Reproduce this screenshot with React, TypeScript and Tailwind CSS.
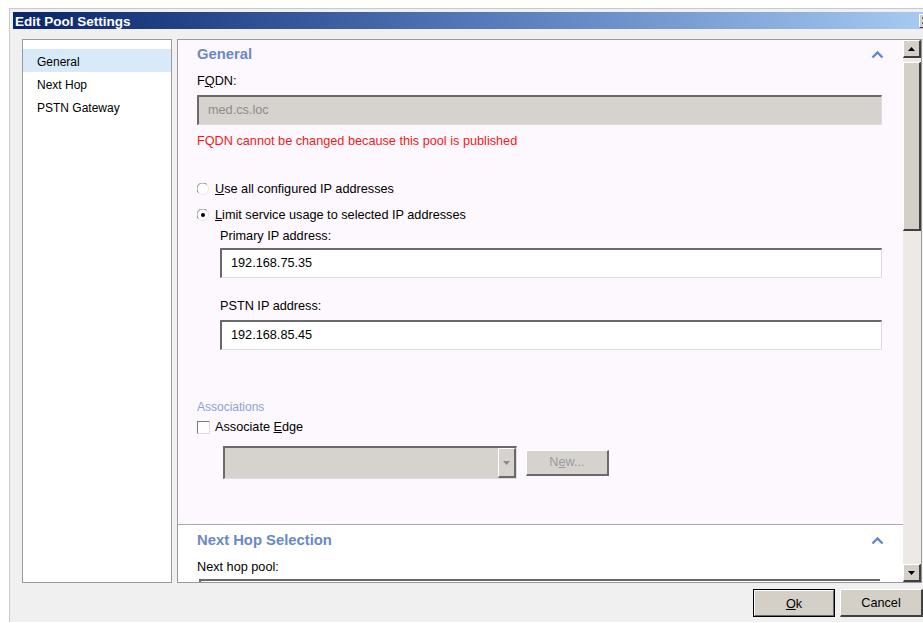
import React from 'react';

const Chevron = () => (
  <svg width="13" height="9" viewBox="0 0 13 9" className="shrink-0">
    <path d="M1.5 7.5 L6.5 2.5 L11.5 7.5" fill="none" stroke="#5f86d2" strokeWidth="2.4" />
  </svg>
);

const Radio = ({ checked }: { checked?: boolean }) => (
  <svg width="12" height="12" viewBox="0 0 12 12" className="shrink-0">
    <circle cx="6" cy="6" r="5.5" fill="#fff" />
    <path d="M1.6 9.9 A5.5 5.5 0 0 1 9.9 1.6" fill="none" stroke="#808080" strokeWidth="1" />
    <path d="M9.9 1.6 A5.5 5.5 0 0 1 1.6 9.9" fill="none" stroke="#e6e6e6" strokeWidth="1" />
    {checked && <circle cx="6" cy="6" r="2" fill="#000" />}
  </svg>
);

const Checkbox = () => (
  <span className="block w-[13px] h-[13px] shrink-0 bg-white border-t border-l border-[#7a7a7a] border-r border-b border-r-[#dedede] border-b-[#dedede]" />
);

const TextBox = ({ value, disabled }: { value?: string; disabled?: boolean }) => (
  <div
    className={
      'h-[30px] flex items-center pl-[9px] border-t-2 border-l-2 border-[#6a6a6a] border-r border-b border-r-[#dcdcdc] border-b-[#dcdcdc] ' +
      (disabled ? 'bg-[#d6d3ce] text-[#8c8c8c] border-r-[#d6d3ce] border-b-[#d6d3ce]' : 'bg-white text-black')
    }
  >
    {value}
  </div>
);

const ScrollArrow = ({ down }: { down?: boolean }) => (
  <div className="h-[18px] flex items-center justify-center bg-[#d4d0c8] border-t border-l border-white border-r-2 border-b-2 border-r-[#404040] border-b-[#404040]">
    <svg width="7" height="4" viewBox="0 0 7 4">
      <path d={down ? 'M0 0 L7 0 L3.5 4 Z' : 'M0 4 L7 4 L3.5 0 Z'} fill="#000" />
    </svg>
  </div>
);

const NavItem = ({ label, active }: { label: string; active?: boolean }) => (
  <div className={'h-[23px] flex items-center pl-[14px] pt-[2px] ' + (active ? 'bg-[#d8eaf9]' : '')}>{label}</div>
);

export default function App() {
  return (
    <div className="w-[923px] h-[623px] overflow-hidden bg-white text-[12px] text-black font-['Liberation_Sans',Arial,sans-serif]">
      <div className="ml-[9px] mt-[8px] h-[614px] border-l border-t border-[#c9c9c9] bg-[#f0f0f0] pl-[3px] pt-[3px] flex flex-col">
        {/* title bar */}
        <div className="h-[17px] -mr-[12px] flex items-center bg-gradient-to-r from-[#0a246a] via-[#5478b8] to-[#a8ccf2]">
          <span className="flex-1 pl-[2px] pt-[3px] text-[13.5px] font-bold text-white">Edit Pool Settings</span>
          <span className="w-[16px] h-[14px] flex items-center pl-[2px] bg-[#d4d0c8] border-t border-l border-white border-r border-b border-r-[#404040] border-b-[#404040]">
            <svg width="7" height="7" viewBox="0 0 7 7">
              <path d="M0.5 0.5 L6.5 6.5 M6.5 0.5 L0.5 6.5" stroke="#000" strokeWidth="1.5" />
            </svg>
          </span>
        </div>

        {/* panels */}
        <div className="flex gap-[5px] pl-[9px] pt-[10px]">
          <div className="w-[150px] h-[544px] bg-white border border-[#9a9a9a] pt-[9px]">
            <NavItem label="General" active />
            <NavItem label="Next Hop" />
            <NavItem label="PSTN Gateway" />
          </div>

          <div className="w-[745px] h-[544px] border border-[#9a9a9a] flex overflow-hidden text-[12.7px]">
            <div className="flex-1 flex flex-col">
              {/* General section */}
              <div className="h-[485px] shrink-0 bg-[#fdf8fd] border-b border-[#a8a8a8] pl-[19px] pr-[21px]">
                <div className="h-[26px] pt-[2px] flex items-center justify-between">
                  <span className="text-[14.8px] font-bold text-[#6a88c8]">General</span>
                  <span className="mr-[-2px]"><Chevron /></span>
                </div>
                <div className="h-[29px] pt-[3px] flex items-center">
                  <span>F<u className="underline-offset-1">Q</u>DN:</span>
                </div>
                <TextBox value="med.cs.loc" disabled />
                <div className="h-[28px] mt-[1px] pt-[3px] flex items-center text-[#f21a1a]">
                  FQDN cannot be changed because this pool is published
                </div>
                <div className="h-[26px] mt-[22px] flex items-center gap-[6px]">
                  <Radio />
                  <span className="pt-[1px]"><u>U</u>se all configured IP addresses</span>
                </div>
                <div className="h-[26px] flex items-center gap-[6px]">
                  <Radio checked />
                  <span className="pt-[1px]"><u>L</u>imit service usage to selected IP addresses</span>
                </div>
                <div className="pl-[23px]">
                  <div className="h-[17px] flex items-center">Primary IP address:</div>
                  <div className="mt-[3px]">
                    <TextBox value="192.168.75.35" />
                  </div>
                  <div className="h-[20px] mt-[18px] pt-[2px] flex items-center">PSTN IP address:</div>
                  <div className="mt-[4px]">
                    <TextBox value="192.168.85.45" />
                  </div>
                </div>
                <div className="h-[20px] mt-[46px] pt-[2px] flex items-center text-[12px] text-[#8aa2d8]">Associations</div>
                <div className="h-[20px] pt-[3px] flex items-center gap-[5px]">
                  <Checkbox />
                  <span className="pt-[1px]">Associate <u>E</u>dge</span>
                </div>
                <div className="mt-[10px] ml-[26px] flex items-center gap-[9px]">
                  <div className="w-[294px] h-[33px] flex justify-end bg-[#d6d3ce] border-t-2 border-l-2 border-[#6a6a6a] border-r border-b border-r-[#dcdcdc] border-b-[#dcdcdc]">
                    <div className="w-[18px] flex items-center justify-center bg-[#d6d3ce] border-l border-t border-white border-r-2 border-b-2 border-r-[#6a6a6a] border-b-[#6a6a6a]">
                      <svg width="7" height="4" viewBox="0 0 7 4">
                        <path d="M0 0 L7 0 L3.5 4 Z" fill="#8a8a8a" />
                      </svg>
                    </div>
                  </div>
                  <div className="w-[83px] h-[26px] pt-[2px] flex items-center justify-center bg-[#d6d3ce] text-[#9a9a9a] border-t border-l border-white border-r-2 border-b-2 border-r-[#6a6a6a] border-b-[#6a6a6a]">
                    <span>N<u>e</u>w...</span>
                  </div>
                </div>
              </div>

              {/* Next hop section */}
              <div className="flex-1 bg-white pl-[19px] pr-[21px] overflow-hidden">
                <div className="h-[28px] pt-[2px] flex items-center justify-between">
                  <span className="text-[14.8px] font-bold text-[#6a88c8]">Next Hop Selection</span>
                  <span className="mr-[-2px]"><Chevron /></span>
                </div>
                <div className="h-[26px] pt-[3px] flex items-center">Next hop pool:</div>
                <div className="ml-[2px] mr-[2px] h-[10px] border-t-2 border-l-2 border-[#6a6a6a] bg-white" />
              </div>
            </div>

            {/* scrollbar */}
            <div className="w-[18px] shrink-0 bg-[#ece9e6] flex flex-col">
              <ScrollArrow />
              <div className="h-[4px]" />
              <div className="h-[169px] bg-[#d4d0c8] border-t border-l border-white border-r-2 border-b-2 border-r-[#404040] border-b-[#404040]" />
              <div className="flex-1" />
              <ScrollArrow down />
            </div>
          </div>
        </div>

        {/* dialog buttons */}
        <div className="flex justify-end gap-[5px] pt-[6px] text-[12.7px]">
          <div className="w-[82px] h-[28px] border border-black">
            <div className="h-full pt-[3px] flex items-center justify-center bg-[#d4d0c8] border-t border-l border-white border-r border-b border-r-[#6a6a6a] border-b-[#6a6a6a]">
              <span><u>O</u>k</span>
            </div>
          </div>
          <div className="w-[83px] h-[28px] pt-[3px] flex items-center justify-center bg-[#d4d0c8] border-t border-l border-white border-r-2 border-b-2 border-r-[#404040] border-b-[#404040]">
            Cancel
          </div>
        </div>
      </div>
    </div>
  );
}
